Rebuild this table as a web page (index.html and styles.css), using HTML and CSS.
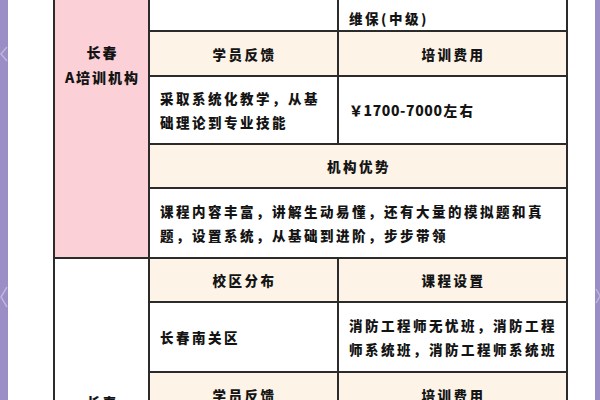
FILE: index.html
```html
<!DOCTYPE html>
<html lang="zh">
<head>
<meta charset="utf-8">
<link rel="stylesheet" href="styles.css">
</head>
<body>
<div class="page">
  <div class="strip strip-left">
    <svg class="chev chev-1" width="8" height="16" viewBox="0 0 8 16"><path d="M7 1 L1 8 L7 15" fill="none" stroke="#ffffff" stroke-width="1.5"/></svg>
    <svg class="chev chev-2" width="8" height="22" viewBox="0 0 8 22"><path d="M7 1 L1 11 L7 21" fill="none" stroke="#ffffff" stroke-width="1.5"/></svg>
  </div>
  <div class="main">
    <div class="table">
      <div class="cell label pink">长春<br>A培训机构</div>
      <div class="cell hd"></div>
      <div class="cell hd"></div>
      <div class="cell data"></div>
      <div class="cell data bottom">维保(中级)</div>
      <div class="cell hd">学员反馈</div>
      <div class="cell hd">培训费用</div>
      <div class="cell data">采取系统化教学，从基<br>础理论到专业技能</div>
      <div class="cell data"><span class="num">￥1700-7000</span>左右</div>
      <div class="cell hd wide">机构优势</div>
      <div class="cell data wide">课程内容丰富，讲解生动易懂，还有大量的模拟题和真<br>题，设置系统，从基础到进阶，步步带领</div>

      <div class="cell label white label-2">长春</div>
      <div class="cell hd">校区分布</div>
      <div class="cell hd">课程设置</div>
      <div class="cell data">长春南关区</div>
      <div class="cell data">消防工程师无忧班，消防工程<br>师系统班，消防工程师系统班</div>
      <div class="cell hd">学员反馈</div>
      <div class="cell hd">培训费用</div>
      <div class="cell data"></div>
      <div class="cell data"></div>
      <div class="cell hd wide"></div>
      <div class="cell data wide"></div>
    </div>
  </div>
  <div class="strip strip-right">
    <svg class="chev chev-3" width="5" height="16" viewBox="0 0 5 16"><path d="M1 1 L5 8 L1 15" fill="none" stroke="#ffffff" stroke-width="1.5"/></svg>
  </div>
</div>
</body>
</html>
```

FILE: styles.css
```css
html, body {
  margin: 0;
  padding: 0;
  background: #ffffff;
}
body {
  width: 600px;
  height: 400px;
  overflow: hidden;
  font-family: "Noto Sans CJK SC", "Noto Sans", sans-serif;
  color: #141414;
}
.page {
  display: flex;
  width: 600px;
  height: 400px;
  overflow: hidden;
}
.strip {
  position: relative;
  background: #9b8ec6;
  flex: none;
}
.strip-left { width: 8px; }
.strip-right { width: 5px; }
.chev {
  position: absolute;
  opacity: 0.35;
}
.chev-1 { left: 0; top: 46px; }
.chev-2 { left: 0; top: 286px; }
.chev-3 { left: 0; top: 288px; }
.main {
  flex: 1;
  background: #ffffff;
  padding-left: 45px;
}
.table {
  margin-top: -130px;
  width: 515px;
  box-sizing: border-box;
  padding: 2px;
  background: #2b2b2b;
  display: grid;
  grid-template-columns: 93px 187px 227px;
  grid-template-rows: 42px 114px 43px 66px 42px 68px 42px 68px 43px 66px 42px 68px;
  gap: 2px;
}
.cell {
  display: flex;
  align-items: center;
  font-size: 13.5px;
  font-weight: 900;
  letter-spacing: 2.5px;
  line-height: 24px;
  box-sizing: border-box;
  overflow: hidden;
}
.num {
  letter-spacing: 0.6px;
  font-size: 14px;
  margin-right: 1px;
}
.bottom {
  align-items: flex-end;
  padding-bottom: 8px;
}
.label {
  grid-column: 1;
  grid-row: span 6;
  justify-content: center;
  text-align: center;
  line-height: 25px;
  letter-spacing: 2px;
  font-size: 14px;
  padding-left: 2px;
}
.pink { background: #fcd0d7; }
.white { background: #ffffff; }
.label-2 {
  align-items: flex-start;
  padding-top: 131px;
}
.hd {
  background: #fdf3e6;
  justify-content: center;
  padding-left: 2px;
}
.data {
  background: #ffffff;
  padding: 0 8px 0 10px;
}
.wide {
  grid-column: span 2;
}
```
